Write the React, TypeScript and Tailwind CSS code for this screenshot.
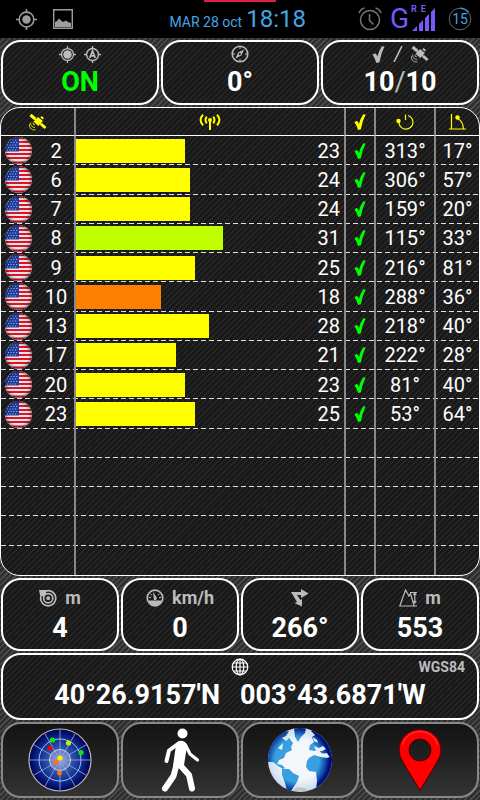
import type { ReactNode } from "react";

const satellites = [
  { id: 2, snr: 23, azimuth: 313, elevation: 17 },
  { id: 6, snr: 24, azimuth: 306, elevation: 57 },
  { id: 7, snr: 24, azimuth: 159, elevation: 20 },
  { id: 8, snr: 31, azimuth: 115, elevation: 33 },
  { id: 9, snr: 25, azimuth: 216, elevation: 81 },
  { id: 10, snr: 18, azimuth: 288, elevation: 36 },
  { id: 13, snr: 28, azimuth: 218, elevation: 40 },
  { id: 17, snr: 21, azimuth: 222, elevation: 28 },
  { id: 20, snr: 23, azimuth: 81, elevation: 40 },
  { id: 23, snr: 25, azimuth: 53, elevation: 64 },
];

const EMPTY_ROWS = 5;
const MAX_SNR = 56.5;

function barColor(snr: number) {
  if (snr >= 30) return "bg-[#bfff00]";
  if (snr < 20) return "bg-[#ff8000]";
  return "bg-[#ffff00]";
}

const STRIPES =
  "bg-[repeating-linear-gradient(135deg,#181818_0px,#181818_2px,#262626_3px,#262626_4px)]";
const ROW =
  "h-[29px] bg-[repeating-linear-gradient(90deg,#e0e0e0_0px,#e0e0e0_5px,transparent_5px,transparent_8px)] bg-[length:100%_1px] bg-bottom bg-no-repeat last:bg-none";
const CELL = "border-l-2 border-[#888888] p-0";
const HEAD_CELL = "border-b border-b-white border-l-2 border-l-[#888888] p-0";

/* Icons */

function TargetIcon({ size, dot = 4 }: { size: number; dot?: number }) {
  return (
    <svg width={size} height={size} viewBox="0 0 20 20" fill="none" stroke="currentColor" strokeWidth="1.5">
      <circle cx="10" cy="10" r="7" />
      <circle cx="10" cy="10" r={dot} fill="currentColor" stroke="none" />
      <path d="M10 0v3M10 17v3M0 10h3M17 10h3" />
    </svg>
  );
}

function AutoTargetIcon() {
  return (
    <svg width="17" height="17" viewBox="0 0 20 20" fill="none" stroke="currentColor" strokeWidth="1.7">
      <circle cx="10" cy="10" r="7" />
      <path d="M10 0v3M10 17v3M0 10h3M17 10h3" />
      <path d="M6.8 14 10 5.8l3.2 8.2M8 11.6h4" strokeWidth="2" />
    </svg>
  );
}

function CompassIcon() {
  return (
    <svg width="18" height="18" viewBox="0 0 18 18" fill="none" stroke="currentColor">
      <circle cx="9" cy="9" r="7.8" strokeWidth="1.6" />
      <path d="M9 2v2M9 14v2M2 9h2M14 9h2" />
      <path d="m13 4.6-2.6 6-6 2.8 2.7-6z" fill="currentColor" stroke="none" />
      <circle cx="8.8" cy="9.1" r="1.1" fill="#1c1c1c" stroke="none" />
    </svg>
  );
}

function CheckIcon({ width, height }: { width: number; height: number }) {
  return (
    <svg width={width} height={height} viewBox="0 0 12 17" fill="currentColor">
      <path d="M0 8.8 2.8 7.2Q4.300 8.500 4.900 10.500 6.500 4.500 9.400.3L12 .4Q8.400 7.500 7 16.200L3.900 17Q2.500 12 0 8.800z" />
    </svg>
  );
}

function SatelliteIcon() {
  return (
    <svg width="18" height="18" viewBox="0 0 18 18" fill="none" stroke="currentColor">
      <path d="m1.500 2 4.800 4M12 11l4.500 4" strokeWidth="3" />
      <path d="m5 5 8 7" strokeWidth="1.200" />
      <path d="m9 4 4.800 4-4.400 5-4.900-4.200z" fill="currentColor" stroke="none" />
      <path d="m12.500 5.500 1.300-1.500" strokeWidth="3" />
      <path d="M6 12q-2.500 0-2-2.500M6 14.500q-4.800-.3-4.300-5M6.500 17Q-.3 17 .4 11" strokeWidth=".8" />
    </svg>
  );
}

function SignalIcon() {
  return (
    <svg width="22" height="16" viewBox="0 0 22 16" fill="none" stroke="currentColor" strokeWidth="2">
      <path d="M11 6v10" />
      <circle cx="11" cy="6" r="2" fill="currentColor" stroke="none" />
      <path d="M7.800 2.600q-2.600 3.400 0 6.800M14.200 2.600q2.600 3.400 0 6.800M4 .8q-4.800 5.200 0 10.600M18 .8q4.800 5.200 0 10.600" />
    </svg>
  );
}

function AzimuthIcon() {
  return (
    <svg width="18" height="16" viewBox="0 0 18 16" fill="none" stroke="currentColor" strokeWidth="1.200">
      <path d="M9.500 6V.5M12 1.500A7 7 0 1 1 3 9" />
      <circle cx="2.500" cy="7" r="2.200" fill="currentColor" stroke="none" />
    </svg>
  );
}

function ElevationIcon() {
  return (
    <svg width="17" height="16" viewBox="0 0 17 16" fill="none" stroke="currentColor" strokeWidth="1.200">
      <path d="M2.500 0v15M0 15h17M8 4q6 3 6.500 11" />
      <circle cx="8.500" cy="3.500" r="2.200" fill="currentColor" stroke="none" />
    </svg>
  );
}

function AccuracyIcon() {
  return (
    <svg width="18" height="18" viewBox="0 0 18 18" fill="none" stroke="currentColor" strokeWidth="1.700">
      <circle cx="9.200" cy="9.200" r="7.600" />
      <circle cx="9.200" cy="9.200" r="4.600" />
      <circle cx="9.200" cy="9.200" r="1.900" fill="currentColor" stroke="none" />
      <path d="M0 1h7v4L4.500 7.500 1 6z" fill="currentColor" stroke="none" />
    </svg>
  );
}

function SpeedIcon() {
  return (
    <svg width="18" height="18" viewBox="0 0 18 18" fill="none" stroke="currentColor">
      <circle cx="9" cy="9" r="7.800" strokeWidth="1.700" />
      <path d="M2.600 12h12.800Q13.500 16 9 16t-6.400-4z" fill="currentColor" />
      <path d="m7 3 4 6-1 2H8z" fill="currentColor" stroke="none" />
      <path d="M3 8.500h2M13 8.500h2M4.500 5l1.400 1M13.500 5l-1.400 1" />
    </svg>
  );
}

function BearingIcon() {
  return (
    <svg width="18" height="18" viewBox="0 0 18 18" fill="currentColor">
      <path d="M0 3h10V0l7.500 4.500L10 9V6H6l3.500 5 1.500-1v7.500L3.500 14l2.500-1z" />
    </svg>
  );
}

function AltitudeIcon() {
  return (
    <svg width="18" height="18" viewBox="0 0 18 18" fill="none" stroke="currentColor" strokeWidth="1.200">
      <path d="M1 16.500 6.500 1l3.500 6 1.500-2.500L15 16.500M0 17h18" />
      <path d="M11 3.500h7M15.800 4v9M14.300 6l1.500-2 1.500 2M14.300 12l1.500 2 1.500-2" />
    </svg>
  );
}

function GridGlobeIcon() {
  return (
    <svg width="18" height="18" viewBox="0 0 18 18" fill="none" stroke="white" strokeWidth="1.200">
      <circle cx="9" cy="9" r="7.800" />
      <ellipse cx="9" cy="9" rx="3.800" ry="7.800" />
      <path d="M9 1v16M1 9h16M2.500 5h13M2.500 13h13" />
    </svg>
  );
}

function FlagIcon() {
  return (
    <svg width="27" height="27" viewBox="0 0 27 27">
      <defs>
        <clipPath id="flag-clip">
          <circle cx="13.500" cy="13.500" r="13.500" />
        </clipPath>
        <radialGradient id="flag-shade">
          <stop offset=".75" stopOpacity="0" />
          <stop offset="1" stopOpacity=".35" />
        </radialGradient>
      </defs>
      <g clipPath="url(#flag-clip)">
        <path d="M0 0h27v27H0z" fill="#e6e6e6" />
        <path d="M0 1h27M0 5h27M0 9h27M0 13h27M0 17h27M0 21h27M0 25.500h27" stroke="#e01228" strokeWidth="2.200" />
        <path d="M0 0h14v14.500H0z" fill="#1c3c9c" />
        <path d="M2 3h11M3 5.500h11M2 8h11M3 10.500h11M2 13h11" stroke="#c4d0f0" strokeWidth=".9" strokeDasharray="1 1.700" />
        <circle cx="13.500" cy="13.500" r="13.500" fill="url(#flag-shade)" />
      </g>
    </svg>
  );
}

function SkyIcon() {
  return (
    <svg width="64" height="64" viewBox="0 0 64 64" fill="none">
      <defs>
        <radialGradient id="sky">
          <stop offset="0" stopColor="#8aa0e0" />
          <stop offset=".35" stopColor="#3458a8" />
          <stop offset=".7" stopColor="#0c2c90" />
          <stop offset="1" stopColor="#000050" />
        </radialGradient>
      </defs>
      <circle cx="32" cy="32" r="31" fill="url(#sky)" stroke="#b4b4b4" strokeWidth="1.200" />
      <g stroke="#8c9cd8" strokeWidth=".9">
        <path d="M32 1v62M1 32h62M16.500 5.200l31 53.600M47.500 5.200l-31 53.600M5.200 16.500l53.600 31M5.200 47.500l53.600-31" />
        <circle cx="32" cy="32" r="21" stroke="#b8c8f4" />
        <circle cx="32" cy="32" r="10.500" fill="#a0a8e0" fillOpacity=".4" stroke="#d0d8f8" />
      </g>
      <circle cx="24.500" cy="12" r="2.600" fill="#00f000" />
      <circle cx="53" cy="24.500" r="2.600" fill="#00f000" />
      <circle cx="40.500" cy="15" r="2.600" fill="#c0f000" />
      <circle cx="22" cy="20" r="2.600" fill="#f00010" />
      <circle cx="32" cy="30" r="2.600" fill="#fff000" />
      <circle cx="28" cy="34" r="2.600" fill="#ff7010" />
      <circle cx="31.500" cy="45" r="2.400" fill="#ff7800" />
    </svg>
  );
}

function WalkIcon() {
  return (
    <svg width="38" height="64" viewBox="0 0 38 64" fill="white" stroke="white" strokeLinecap="round" strokeLinejoin="round">
      <circle cx="21.500" cy="5.500" r="5" stroke="none" />
      <path d="M18 14q6-1.500 7 4L22 37l-9 1 3-21z" strokeWidth="2" />
      <path d="M17.500 15.500 8 22.500 5.500 33" fill="none" strokeWidth="4" />
      <path d="m24.500 17 4.500 9 7.500 6" fill="none" strokeWidth="3.200" />
      <path d="m15.500 37-3 11L4 60.500M19 37l9 10 3 13.500" fill="none" strokeWidth="6" />
    </svg>
  );
}

function EarthIcon() {
  return (
    <svg width="64" height="64" viewBox="0 0 64 64">
      <defs>
        <clipPath id="earth-clip">
          <circle cx="32" cy="32" r="32" />
        </clipPath>
        <radialGradient id="sea">
          <stop offset=".6" stopColor="#f4f6fa" />
          <stop offset="1" stopColor="#c8dcf0" />
        </radialGradient>
        <radialGradient id="land" gradientUnits="userSpaceOnUse" cx="29" cy="32" r="34">
          <stop offset=".65" stopColor="#38a0e0" />
          <stop offset=".82" stopColor="#1454b0" />
          <stop offset=".95" stopColor="#001078" />
        </radialGradient>
      </defs>
      <g clipPath="url(#earth-clip)">
        <path d="M0 0h64v64H0z" fill="url(#sea)" />
        <g fill="url(#land)">
          <path d="M0 34V16L12 5l9-2-3 5-4 2 4 3 3-3 4 5-2 4 1 3-6 3-2 5-5 2-2 4 5 1 3 3-2 1-5-3-5-4z" />
          <path d="M26 0h12l-1 5-4 4-3 5-3-5z" />
          <path d="m14 41 7 0 4 4 6 3-2 6-6 9h-4l-2-8-3-8z" />
          <path d="m41 22 1-5 4-3-2-5 3-2-4-4 4-3 19 12v20l-4-2-3-5-5 1-3-4-4 1z" />
          <path d="m41 30 5-3 7 2 6 1 5-2v26L52 62h-4l1-9-1-9-7-1-3-4 1-6z" />
        </g>
        <path d="m46 18 5 2 4-2 3 3-4 2-6 0zM10 20l5-5-1 7zM45 9l4 3 1 3-4-2zM52 25l6 1 4 3-8-1z" fill="#e8f2fa" />
        <path d="m24 63 5-4 8 1 5 4z" fill="#c0c4c8" />
      </g>
    </svg>
  );
}

function PinIcon() {
  return (
    <svg width="44" height="64" viewBox="0 0 44 64">
      <path
        d="M22 1.500C10.500 1.500 1 10.500 1 22q0 6 4.500 13L22 62.500 38.500 35Q43 28 43 22C43 10.500 33.500 1.500 22 1.500zM22 11a11 11 0 1 1 0 22 11 11 0 0 1 0-22z"
        fill="#ff0000"
        stroke="#500000"
        fillRule="evenodd"
      />
      <path d="M4 17Q9 3.500 22 3.500T40 17" fill="none" stroke="#f04050" />
    </svg>
  );
}

/* Layout parts */

function Card({ header, value, tall = false }: { header: ReactNode; value: ReactNode; tall?: boolean }) {
  return (
    <section
      className={`flex flex-col items-center rounded-[20px] border-2 border-white ${STRIPES} ${tall ? "h-[73px] pt-1" : "h-[65px]"}`}
    >
      <div className={`flex items-center gap-2 text-lg font-bold text-[#bcbcbc] ${tall ? "h-7" : "h-6"}`}>{header}</div>
      <div className="text-[27px] leading-8 font-bold">{value}</div>
    </section>
  );
}

function StatusBar() {
  return (
    <header className="relative flex h-[38px] items-center bg-black pr-2 pl-4 text-[#42a5e4]">
      <div className="absolute top-0 left-[204px] h-0.5 w-18 bg-[#e02040]" />
      <div className="flex items-center gap-4 text-[#9c9c9c]">
        <TargetIcon size={21} />
        <svg width="20" height="20" viewBox="0 0 20 20">
          <path d="M.7.700h18.600v18.600H.7z" fill="none" stroke="currentColor" strokeWidth="1.400" />
          <path d="M2 18v-5l2-1 2-2.500 2 2 2 1.500 3-1.500 2 1.500 3 1v4z" fill="currentColor" />
        </svg>
      </div>
      <div className="ml-auto flex items-baseline gap-1">
        <span className="text-sm">MAR 28 oct</span>
        <time className="text-[24px] leading-7">18:18</time>
      </div>
      <div className="ml-13 flex items-center gap-2">
        <svg width="24" height="24" viewBox="0 0 24 24" fill="none" stroke="#777777" strokeWidth="1.500">
          <circle cx="12" cy="13" r="9.500" />
          <path d="M11.500 7v6.500l4 4M1 6q1.500-4 5.500-5M23 6q-1.500-4-5.500-5" />
        </svg>
        <div className="flex items-center gap-0.5 text-[#7858f8]">
          <span className="text-[28px] leading-8">G</span>
          <div className="relative mr-1">
            <span className="absolute -top-1 left-0 flex gap-1 text-[9px] leading-3 font-bold">
              <span>R</span>
              <span>E</span>
            </span>
            <svg width="25" height="24" viewBox="0 0 25 24" fill="currentColor">
              <path d="m1 24 5-5v5zM8 17l4-4v11H8zM14 11l4-4v17h-4zM20 5l4-4v23h-4z" />
            </svg>
          </div>
        </div>
        <div className="relative flex size-6 items-center justify-center text-sm">
          <svg width="24" height="24" viewBox="0 0 24 24" fill="none" className="absolute inset-0">
            <circle cx="12" cy="12" r="10.800" stroke="#666666" />
            <path d="M12 1.200a10.800 10.800 0 0 1 8.500 4.300" stroke="#3090d8" strokeWidth="1.600" />
          </svg>
          15
        </div>
      </div>
    </header>
  );
}

function SatelliteTable() {
  return (
    <div className={`overflow-hidden rounded-[20px] border border-white ${STRIPES}`}>
      <table className="h-[467px] w-full table-fixed border-separate border-spacing-0 text-xl leading-7">
        <colgroup>
          <col className="w-[73px]" />
          <col />
          <col className="w-[30px]" />
          <col className="w-[60px]" />
          <col className="w-[45px]" />
        </colgroup>
        <thead>
          <tr className="h-7 text-[#ffff00]">
            <th aria-label="Satellite" className="border-b border-white p-0">
              <span className="flex justify-center"><SatelliteIcon /></span>
            </th>
            <th aria-label="Signal" className={HEAD_CELL}>
              <span className="flex justify-center"><SignalIcon /></span>
            </th>
            <th aria-label="Used" className={HEAD_CELL}>
              <span className="flex justify-center"><CheckIcon width={12} height={16} /></span>
            </th>
            <th aria-label="Azimuth" className={HEAD_CELL}>
              <span className="flex justify-center"><AzimuthIcon /></span>
            </th>
            <th aria-label="Elevation" className={HEAD_CELL}>
              <span className="flex justify-center"><ElevationIcon /></span>
            </th>
          </tr>
        </thead>
        <tbody>
          {satellites.map((sat) => (
            <tr key={sat.id} className={ROW}>
              <td className="p-0">
                <div className="flex items-center justify-between pl-1">
                  <FlagIcon />
                  <span className="w-9 text-center">{sat.id}</span>
                </div>
              </td>
              <td className={CELL}>
                <div className="flex items-center">
                  <div className={`h-6 ${barColor(sat.snr)}`} style={{ width: `${(sat.snr / MAX_SNR) * 100}%` }} />
                  <span className="ml-auto pr-1">{sat.snr}</span>
                </div>
              </td>
              <td className={CELL}>
                <span className="flex justify-center text-[#00ff00]"><CheckIcon width={12} height={16} /></span>
              </td>
              <td className={`${CELL} text-center`}>{sat.azimuth}°</td>
              <td className={`${CELL} text-center`}>{sat.elevation}°</td>
            </tr>
          ))}
          {Array.from({ length: EMPTY_ROWS }, (_, i) => (
            <tr key={i} className={ROW}>
              <td className="p-0" />
              <td className={CELL} />
              <td className={CELL} />
              <td className={CELL} />
              <td className={CELL} />
            </tr>
          ))}
        </tbody>
      </table>
    </div>
  );
}

function NavButton({ label, children }: { label: string; children: ReactNode }) {
  return (
    <button
      type="button"
      aria-label={label}
      className="flex h-19 items-center justify-center rounded-[20px] border-2 border-[#888888] bg-linear-to-b from-[#131313] to-[#333333]"
    >
      {children}
    </button>
  );
}

export default function App() {
  return (
    <div className="flex min-h-screen flex-col bg-[#333333] font-[Roboto,sans-serif] text-white">
      <StatusBar />
      <main className="flex flex-1 flex-col gap-0.5 bg-[repeating-linear-gradient(135deg,#2e2e2e_0px,#2e2e2e_2px,#4c4c4c_3px,#4c4c4c_4px)] pt-0.5">
        <div className="grid grid-cols-3 gap-0.5 px-px">
          <Card
            header={<><TargetIcon size={17} dot={5} /><AutoTargetIcon /></>}
            value={<span className="text-[#00ff00]">ON</span>}
          />
          <Card header={<CompassIcon />} value="0°" />
          <Card
            header={
              <>
                <CheckIcon width={13} height={17} />
                <svg width="10" height="16" viewBox="0 0 10 16"><path d="M9 0 1 16" stroke="currentColor" strokeWidth="1.600" /></svg>
                <SatelliteIcon />
              </>
            }
            value={<>10<span className="font-normal text-[#bcbcbc]">/</span>10</>}
          />
        </div>

        <SatelliteTable />

        <div className="grid grid-cols-4 gap-0.5 px-px">
          <Card tall header={<><AccuracyIcon />m</>} value="4" />
          <Card tall header={<><SpeedIcon />km/h</>} value="0" />
          <Card tall header={<BearingIcon />} value="266°" />
          <Card tall header={<><AltitudeIcon />m</>} value="553" />
        </div>

        <section className={`mx-px flex h-[67px] flex-col rounded-[20px] border-2 border-white ${STRIPES}`}>
          <div className="grid h-6 grid-cols-3 items-center px-3">
            <span className="col-start-2 flex justify-center"><GridGlobeIcon /></span>
            <span className="text-right text-sm font-bold text-[#bcbcbc]">WGS84</span>
          </div>
          <div className="flex justify-center gap-5 text-[27px] leading-8 font-bold">
            <span>40°26.9157'N</span>
            <span>003°43.6871'W</span>
          </div>
        </section>

        <nav className="grid grid-cols-4 gap-0.5 px-px">
          <NavButton label="Sky view"><SkyIcon /></NavButton>
          <NavButton label="Walk"><WalkIcon /></NavButton>
          <NavButton label="World"><EarthIcon /></NavButton>
          <NavButton label="Location"><PinIcon /></NavButton>
        </nav>
      </main>
    </div>
  );
}
